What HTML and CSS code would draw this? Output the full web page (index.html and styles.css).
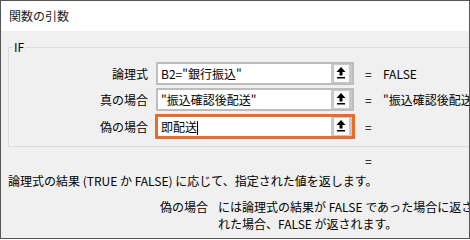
FILE: index.html
```html
<!DOCTYPE html>
<html lang="ja">

<head>
    <meta charset="UTF-8">
    <title>関数の引数</title>
    <link rel="stylesheet" href="styles.css">
</head>

<body>
    <div class="window">
        <div class="titlebar">関数の引数</div>
        <div class="content">
            <fieldset class="group">
                <legend>IF</legend>
                <div class="args">
                    <label class="arg-name">論理式</label>
                    <div class="field">
                        <span class="field-text">B2="銀行振込"</span>
                        <span class="ref-button">
                            <svg width="15" height="17" viewBox="0 0 15 17"><path d="M7 2 L2.5 7 H5.5 V10.5 H8.5 V7 H11.5 Z" fill="#000"/><rect x="3" y="12" width="8" height="1.5" fill="#000"/></svg>
                        </span>
                    </div>
                    <span class="eq">=</span>
                    <span class="result">FALSE</span>

                    <label class="arg-name">真の場合</label>
                    <div class="field">
                        <span class="field-text">"振込確認後配送"</span>
                        <span class="ref-button">
                            <svg width="15" height="17" viewBox="0 0 15 17"><path d="M7 2 L2.5 7 H5.5 V10.5 H8.5 V7 H11.5 Z" fill="#000"/><rect x="3" y="12" width="8" height="1.5" fill="#000"/></svg>
                        </span>
                    </div>
                    <span class="eq">=</span>
                    <span class="result">"振込確認後配送"</span>

                    <label class="arg-name">偽の場合</label>
                    <div class="field active">
                        <span class="field-text">即配送<span class="caret"></span></span>
                        <span class="ref-button">
                            <svg width="15" height="17" viewBox="0 0 15 17"><path d="M7 2 L2.5 7 H5.5 V10.5 H8.5 V7 H11.5 Z" fill="#000"/><rect x="3" y="12" width="8" height="1.5" fill="#000"/></svg>
                        </span>
                    </div>
                    <span class="eq">=</span>
                    <span class="result"></span>
                </div>
            </fieldset>

            <div class="total"><span class="eq">=</span></div>

            <p class="summary">論理式の結果 (TRUE か FALSE) に応じて、指定された値を返します。</p>

            <div class="arg-help">
                <span class="help-name">偽の場合</span>
                <span class="help-text">には論理式の結果が FALSE であった場合に返される値を指定します。省略さ<br>れた場合、FALSE が返されます。</span>
            </div>
        </div>
    </div>
</body>

</html>
```

FILE: styles.css
```css
body {
    margin: 0;
    background: #FFFFFF;
    font-family: "Noto Sans CJK JP", "Noto Sans", sans-serif;
    font-size: 12px;
    color: #000000;
}

.window {
    width: 470px;
    height: 239px;
    box-sizing: border-box;
    border: 1px solid #555555;
    overflow: hidden;
    display: flex;
    flex-direction: column;
}

.titlebar {
    height: 30px;
    flex: none;
    background: #FFFFFF;
    padding-left: 8px;
    line-height: 30px;
    color: #1a1a1a;
}

.content {
    flex: 1;
    background: #F0F0F0;
    padding-left: 7px;
    white-space: nowrap;
}

/* Group box, runs out past the right edge like the real dialog. */
.group {
    width: 480px;
    margin: 9px 0 0 0;
    padding: 8px 0 7px 0;
    border: 1px solid #DCDCDC;
    min-width: 0;
}

.group legend {
    padding: 0 2px;
    margin-left: 3px;
    line-height: 14px;
}

.args {
    display: grid;
    grid-template-columns: 147px 198px 29px 1fr;
    row-gap: 3px;
    align-items: center;
}

.arg-name {
    text-align: right;
    padding-right: 8px;
}

.field {
    height: 23px;
    box-sizing: border-box;
    border: 2px solid #BDBDBD;
    background: #FFFFFF;
    display: flex;
    align-items: center;
}

.field.active {
    border: 3px solid #EE6A22;
    height: 25px;
    margin: 0 -1px;
}

.field-text {
    flex: 1;
    padding-left: 3px;
    overflow: hidden;
}

.caret {
    display: inline-block;
    width: 1px;
    height: 14px;
    background: #000;
    vertical-align: -3px;
}

.ref-button {
    align-self: stretch;
    width: 15px;
    border: 3px solid #C8C8C8;
    border-top-width: 1px;
    border-bottom-width: 1px;
    background: #FAFAFA;
    display: flex;
    align-items: center;
    justify-content: center;
}

.eq {
    padding-left: 11px;
}

.total {
    margin-top: 7px;
    padding-left: 357px;
    line-height: 14px;
}

.total .eq {
    padding-left: 0;
}

.summary {
    margin: 6px 0 0 0;
    line-height: 14px;
}

.arg-help {
    display: flex;
    gap: 10px;
    margin-top: 10px;
    padding-left: 152px;
    line-height: 17px;
}
```
